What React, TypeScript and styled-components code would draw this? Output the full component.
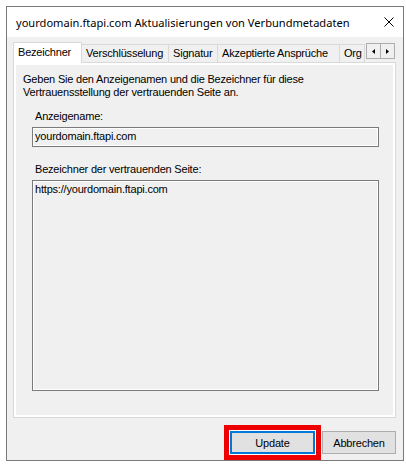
import React from "react";
import styled, { createGlobalStyle } from "styled-components";

const GlobalStyle = createGlobalStyle`
  body {
    margin: 0;
    background: #ffffff;
    font-family: "Liberation Sans", Arial, sans-serif;
    font-size: 11px;
    letter-spacing: -0.2px;
    color: #000000;
  }
`;

const DialogWindow = styled.div`
  margin: 6px;
  width: 398px;
  height: 455px;
  box-sizing: border-box;
  border: 1px solid #7a7a7a;
  background: #f0f0f0;
  display: flex;
  flex-direction: column;
`;

const TitleBar = styled.div`
  height: 30px;
  flex: none;
  background: #ffffff;
  display: flex;
  align-items: center;
  padding-left: 9px;
  padding-right: 9px;
`;

const TitleText = styled.div`
  font-family: "Noto Sans", "Open Sans", sans-serif;
  font-size: 11.1px;
  letter-spacing: 0;
  color: #000000;
  white-space: nowrap;
`;

const CloseIcon = styled.svg`
  margin-left: auto;
  width: 10px;
  height: 10px;
  flex: none;
`;

const DialogBody = styled.div`
  flex: 1;
  display: flex;
  flex-direction: column;
  padding: 5px 7px 6px 6px;
  min-height: 0;
`;

const TabStrip = styled.div`
  height: 21px;
  flex: none;
  display: flex;
  align-items: flex-end;
  margin-bottom: -1px;
  position: relative;
  z-index: 1;
`;

const TabList = styled.div`
  flex: 1;
  height: 100%;
  display: flex;
  align-items: flex-end;
  overflow: hidden;
`;

const Tab = styled.div<{ $width: number; $active?: boolean }>`
  flex: none;
  box-sizing: border-box;
  width: ${({ $width }) => $width}px;
  height: ${({ $active }) => ($active ? 21 : 18)}px;
  margin-bottom: ${({ $active }) => ($active ? 0 : 1)}px;
  padding-left: 4px;
  padding-top: ${({ $active }) => ($active ? 3 : 2)}px;
  background: ${({ $active }) => ($active ? "#ffffff" : "#f0f0f0")};
  border-top: 1px solid #d9d9d9;
  border-right: 1px solid #d9d9d9;
  border-left: ${({ $active }) => ($active ? "1px solid #d9d9d9" : "none")};
  white-space: nowrap;
  line-height: 13px;
`;

const ScrollButtons = styled.div`
  flex: none;
  align-self: flex-start;
  display: flex;
  margin-top: 1px;
  margin-right: 1px;
`;

const ScrollButton = styled.div`
  width: 15px;
  height: 16px;
  box-sizing: border-box;
  border: 1px solid #adadad;
  margin-left: -1px;
  background: #f0f0f0;
  display: flex;
  align-items: center;
  justify-content: center;
`;

const Panel = styled.div`
  flex: 1;
  border: 1px solid #d9d9d9;
  box-shadow: inset 0 0 0 2px #ffffff;
  padding: 10px 9px 0 9px;
  display: flex;
  flex-direction: column;
  min-height: 0;
`;

const Intro = styled.div`
  line-height: 13px;
`;

const FieldLabel = styled.div<{ $gap: number }>`
  margin-top: ${({ $gap }) => $gap}px;
  margin-left: 12px;
  line-height: 13px;
`;

const TextField = styled.div<{ $height: number }>`
  margin-top: 4px;
  margin-left: 9px;
  width: 347px;
  height: ${({ $height }) => $height}px;
  box-sizing: border-box;
  border: 1px solid #7a7a7a;
  box-shadow: inset 0 0 0 1px #ffffff;
  background: #f0f0f0;
  padding: 2px 2px 0 2px;
  line-height: 13px;
`;

const ButtonRow = styled.div`
  flex: none;
  display: flex;
  justify-content: flex-end;
  gap: 7px;
  margin-top: 13px;
`;

const DialogButton = styled.div<{ $width: number; $focused?: boolean }>`
  width: ${({ $width }) => $width}px;
  height: 23px;
  box-sizing: border-box;
  background: #e1e1e1;
  border: ${({ $focused }) =>
    $focused ? "2px solid #0078d7" : "1px solid #adadad"};
  display: flex;
  align-items: center;
  justify-content: center;
  box-shadow: ${({ $focused }) =>
    $focused ? "0 0 0 1px #ffffff, 0 0 0 6px #ee0000" : "none"};
`;

const Arrow: React.FC<{ dir: "left" | "right" }> = ({ dir }) => (
  <svg width="3" height="5" viewBox="0 0 3 5">
    {dir === "left" ? (
      <polygon points="3,0 3,5 0,2.5" fill="#000" />
    ) : (
      <polygon points="0,0 0,5 3,2.5" fill="#000" />
    )}
  </svg>
);

const tabs = [
  { label: "Bezeichner", width: 69, active: true },
  { label: "Verschlüsselung", width: 87 },
  { label: "Signatur", width: 49 },
  { label: "Akzeptierte Ansprüche", width: 122 },
  { label: "Org", width: 25 },
];

const App: React.FC = () => {
  return (
    <>
      <GlobalStyle />
      <DialogWindow>
        <TitleBar>
          <TitleText>
            yourdomain.ftapi.com Aktualisierungen von Verbundmetadaten
          </TitleText>
          <CloseIcon viewBox="0 0 10 10">
            <path d="M0.5 0.5 L9.5 9.5 M9.5 0.5 L0.5 9.5" stroke="#000" strokeWidth="1" />
          </CloseIcon>
        </TitleBar>
        <DialogBody>
          <TabStrip>
            <TabList>
              {tabs.map((t) => (
                <Tab key={t.label} $width={t.width} $active={t.active}>
                  {t.label}
                </Tab>
              ))}
            </TabList>
            <ScrollButtons>
              <ScrollButton>
                <Arrow dir="left" />
              </ScrollButton>
              <ScrollButton>
                <Arrow dir="right" />
              </ScrollButton>
            </ScrollButtons>
          </TabStrip>
          <Panel>
            <Intro>
              Geben Sie den Anzeigenamen und die Bezeichner für diese
              <br />
              Vertrauensstellung der vertrauenden Seite an.
            </Intro>
            <FieldLabel $gap={11}>Anzeigename:</FieldLabel>
            <TextField $height={20}>yourdomain.ftapi.com</TextField>
            <FieldLabel $gap={16}>Bezeichner der vertrauenden Seite:</FieldLabel>
            <TextField $height={211}>https://yourdomain.ftapi.com</TextField>
          </Panel>
          <ButtonRow>
            <DialogButton $width={85} $focused>
              Update
            </DialogButton>
            <DialogButton $width={74}>Abbrechen</DialogButton>
          </ButtonRow>
        </DialogBody>
      </DialogWindow>
    </>
  );
};

export default App;
